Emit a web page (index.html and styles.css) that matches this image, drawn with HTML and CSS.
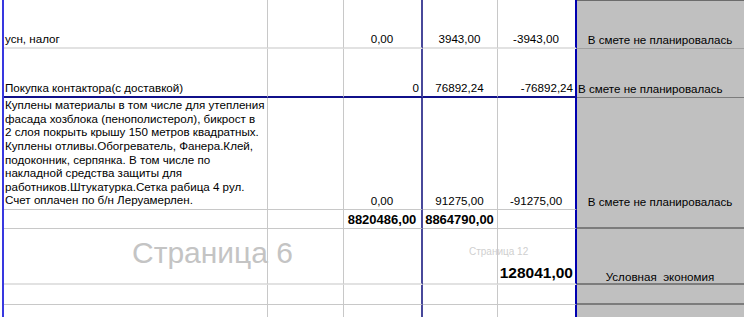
FILE: index.html
```html
<!DOCTYPE html>
<html lang="ru">
<head>
<meta charset="utf-8">
<title>Смета</title>
<link rel="stylesheet" href="styles.css">
</head>
<body>
<div class="sheet">
  <!-- row 1 -->
  <div class="c a r1">усн, налог</div>
  <div class="c b r1"></div>
  <div class="c cc r1 center">0,00</div>
  <div class="c d r1 center">3943,00</div>
  <div class="c e r1 center">-3943,00</div>
  <div class="c f r1 top center">В смете не планировалась</div>
  <!-- row 2 -->
  <div class="c a r2">Покупка контактора(с доставкой)</div>
  <div class="c b r2"></div>
  <div class="c cc r2 right">0</div>
  <div class="c d r2 center">76892,24</div>
  <div class="c e r2 right">-76892,24</div>
  <div class="c f r2 left">В смете не планировалась</div>
  <!-- row 3 -->
  <div class="c a r3"><div class="wrap">Куплены материалы в том числе для утепления<br>фасада хозблока (пенополистерол), бикрост в<br>2 слоя покрыть крышу 150 метров квадратных.<br>Куплены отливы.Обогреватель, Фанера.Клей,<br>подоконник, серпянка. В том числе по<br>накладной средства защиты для<br>работников.Штукатурка.Сетка рабица 4 рул.<br>Счет оплачен по б/н Леруамерлен.</div></div>
  <div class="c b r3"></div>
  <div class="c cc r3 center">0,00</div>
  <div class="c d r3 center">91275,00</div>
  <div class="c e r3 center">-91275,00</div>
  <div class="c f r3 nob center">В смете не планировалась</div>
  <!-- row 4 -->
  <div class="c a r4"></div>
  <div class="c b r4"></div>
  <div class="c cc r4 center bold">8820486,00</div>
  <div class="c d r4 center bold">8864790,00</div>
  <div class="c e r4"></div>
  <div class="c f r4"></div>
  <!-- row 5 -->
  <div class="c a r5"></div>
  <div class="c b r5"></div>
  <div class="c cc r5"></div>
  <div class="c d r5"></div>
  <div class="c e r5 right big">128041,00</div>
  <div class="c f r5 center low">Условная&nbsp; экономия</div>
  <!-- row 6 -->
  <div class="c a r6"></div>
  <div class="c b r6"></div>
  <div class="c cc r6"></div>
  <div class="c d r6"></div>
  <div class="c e r6"></div>
  <div class="c f r6"></div>
  <!-- row 7 -->
  <div class="c a r7"></div>
  <div class="c b r7"></div>
  <div class="c cc r7"></div>
  <div class="c d r7"></div>
  <div class="c e r7"></div>
  <div class="c f r7"></div>

  <div class="mark mark-big">Страница 6</div>
  <div class="mark mark-small">Страница 12</div>
</div>
</body>
</html>
```

FILE: styles.css
```css
html, body {
  margin: 0;
  padding: 0;
  background: #ffffff;
}

body {
  font-family: "Liberation Sans", Arial, sans-serif;
  font-size: 11.6px;
  color: #000000;
  width: 744px;
  height: 317px;
  overflow: hidden;
}

.sheet {
  position: relative;
  margin-left: 2px;
  border-left: 2px solid #3838e0;
  display: grid;
  grid-template-columns: 264px 76px 79px 75px 79px 1fr;
  grid-template-rows: 49px 49px 112px 19px 56px 20px 20px;
  height: 317px;
  box-sizing: border-box;
}

.c {
  box-sizing: border-box;
  display: flex;
  align-items: flex-end;
  white-space: nowrap;
  padding: 0 2px 2px 1px;
  line-height: 13px;
  border-right: 1px solid #c8c8c8;
  border-bottom: 1px solid #c8c8c8;
  overflow: visible;
}

.cc { border-right: 2px solid #48489a; }
.e { border-right: 2px solid #0000b0; }
.f {
  background: #c0c0c0;
  border-right: none;
  border-bottom: 1px solid #7c7c7c;
}
.top { border-top: 1px solid #6c6c6c; }

.r1 { border-bottom: 2px solid #e2e2e2; }
.r2 { border-bottom: 2px solid #10108a; }
.r5 { border-bottom: 2px solid #e2e2e2; }
.r4.f, .r5.f, .r6.f { border-bottom: 2px solid #7c7c7c; }
.r1.f { border-bottom: 1px solid #a0a0a0; }
.r2.f { border-bottom: 1px solid #7c7c7c; }
.nob.f { border-bottom: none; }
.r7 { border-bottom: none; }

.center { justify-content: center; }
.right { justify-content: flex-end; }
.left { justify-content: flex-start; padding-left: 1px; }
.low { padding-bottom: 0; }

.wrap {
  white-space: nowrap;
  line-height: 13.6px;
}

.bold {
  font-weight: bold;
  font-size: 13px;
  padding-bottom: 2px;
}

.big {
  font-weight: bold;
  font-size: 15.5px;
  line-height: 17px;
  padding-bottom: 2px;
}

.mark {
  position: absolute;
  color: #c4c4c4;
  white-space: nowrap;
  pointer-events: none;
}

.mark-big {
  left: 128px;
  top: 236px;
  font-size: 30px;
  line-height: 34px;
}

.mark-small {
  left: 465px;
  top: 245px;
  font-size: 10px;
  line-height: 13px;
  color: #cfcfcf;
}
```
